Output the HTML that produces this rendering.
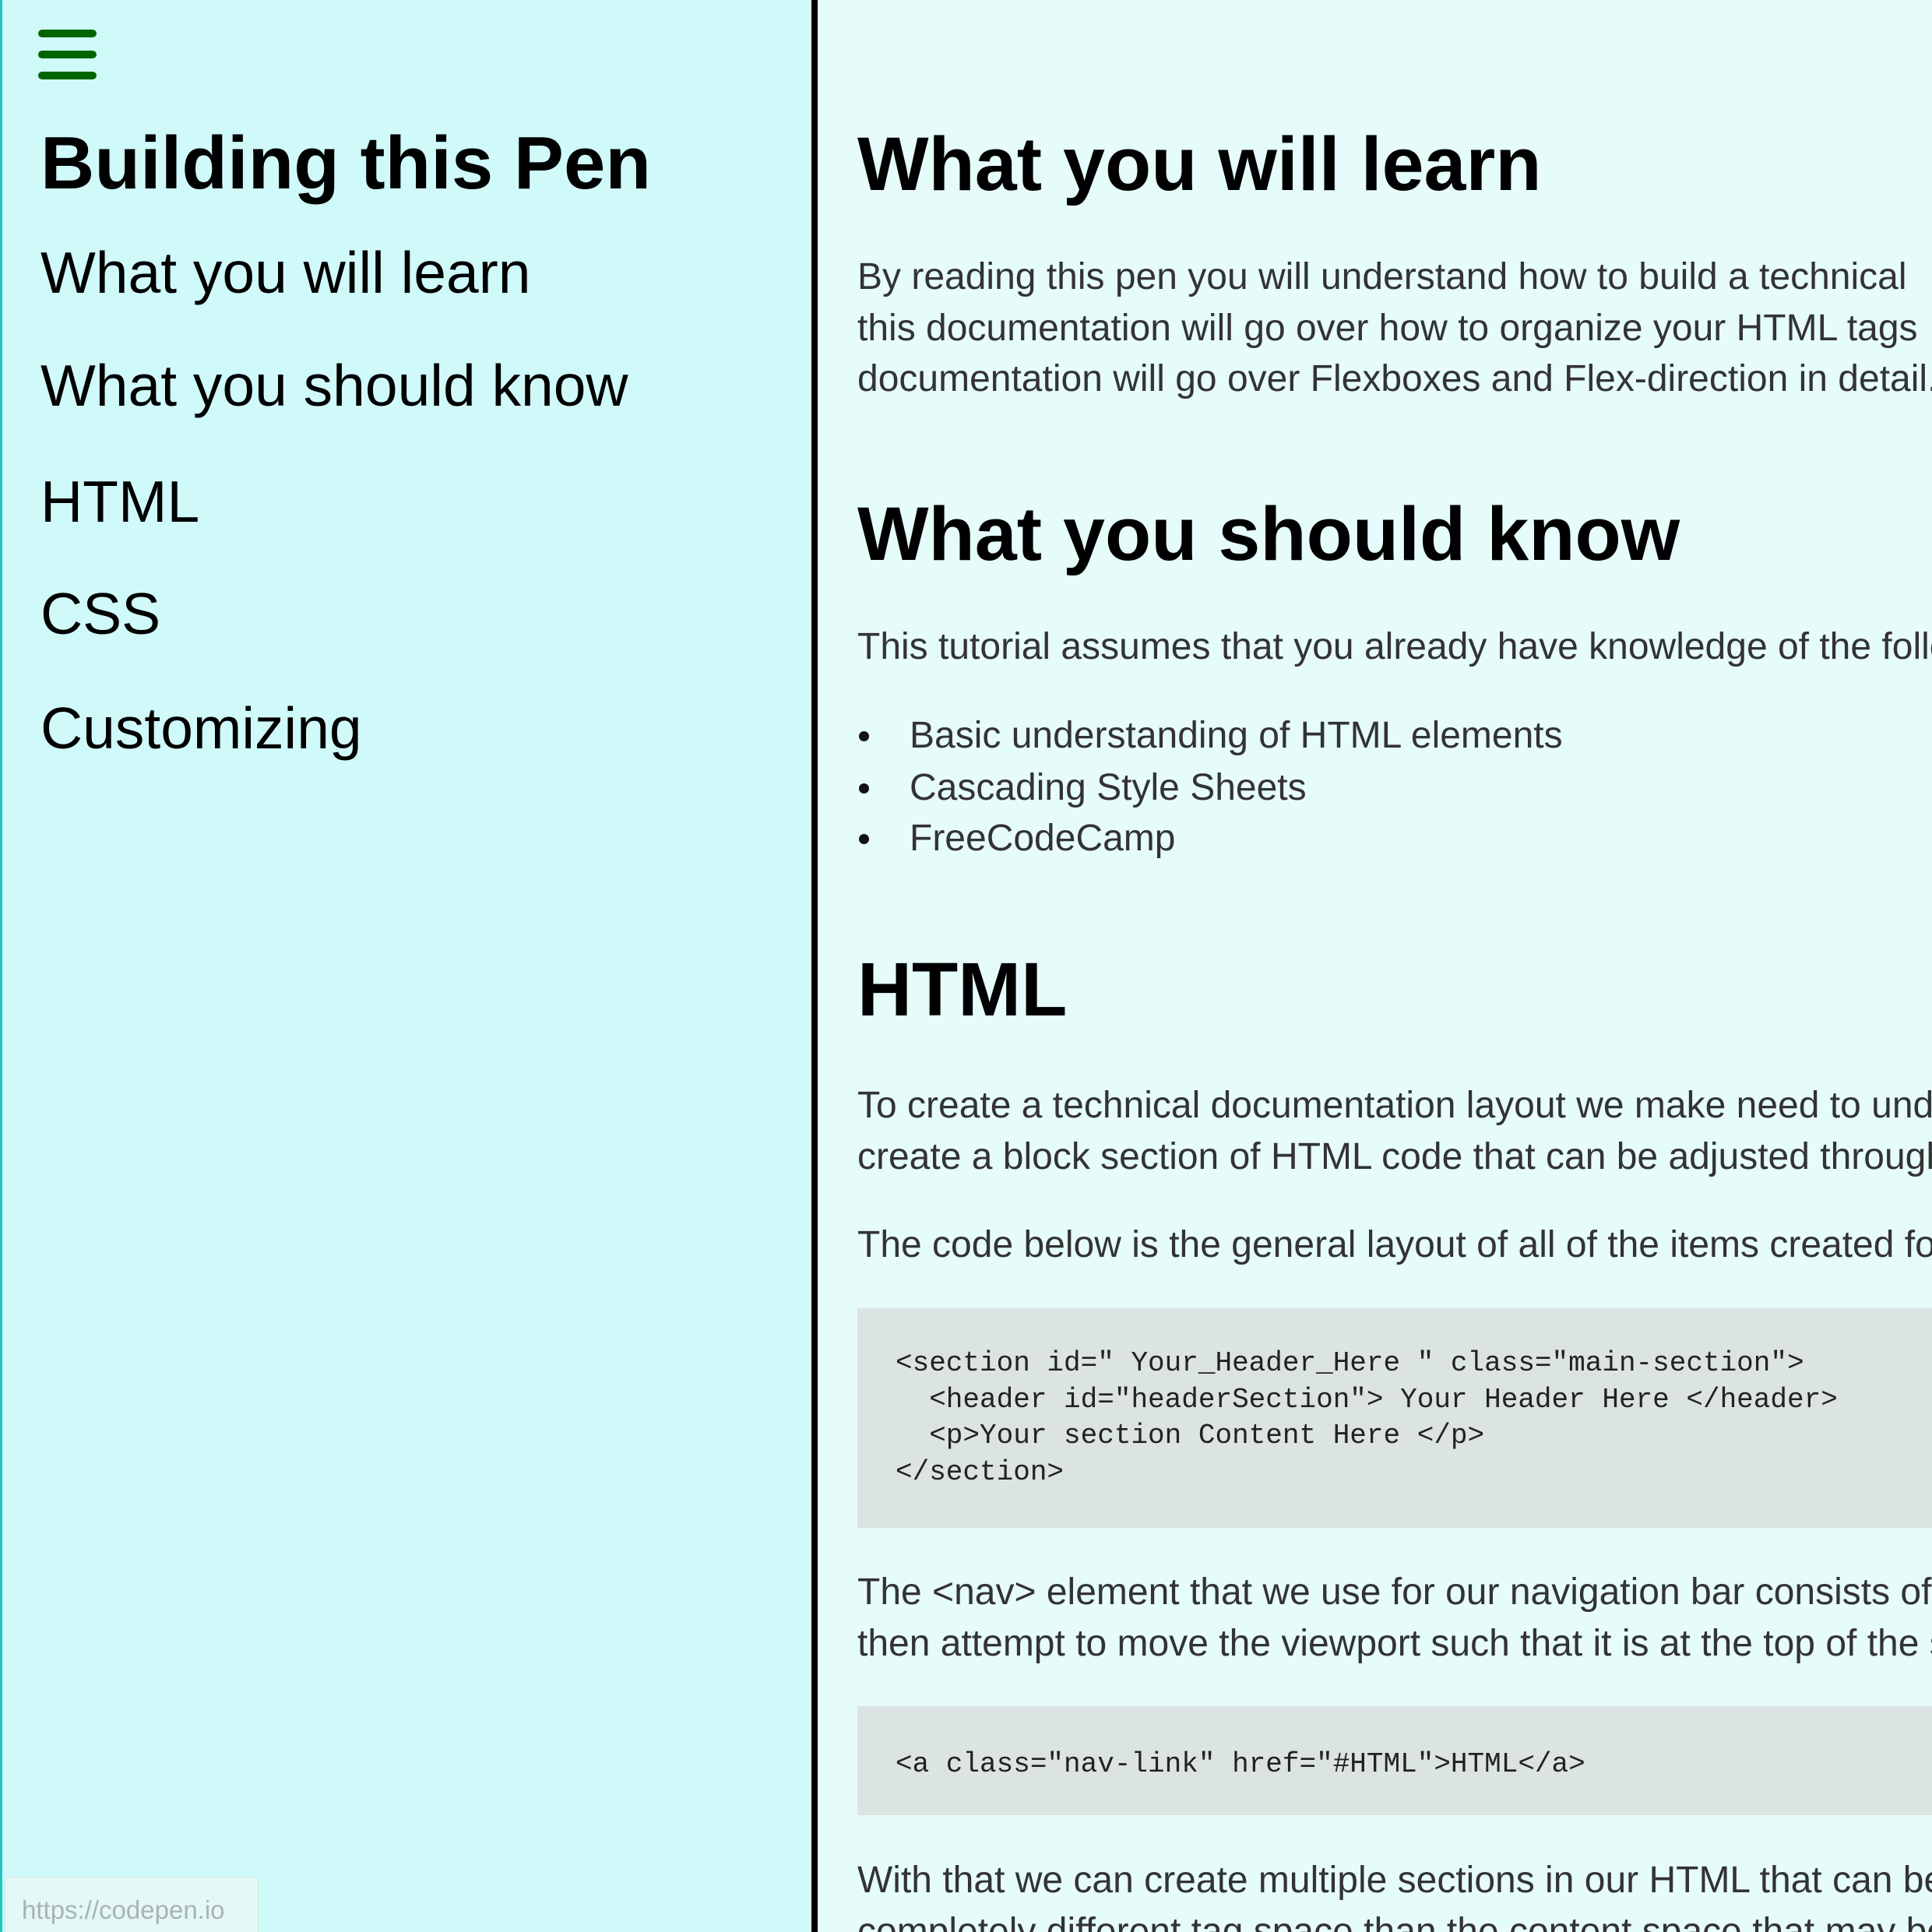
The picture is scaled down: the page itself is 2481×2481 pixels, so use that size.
<!DOCTYPE html>
<html><head><meta charset="utf-8"><style>
html,body{margin:0;padding:0;}
body{width:2481px;height:2481px;overflow:hidden;position:relative;background:#e6fcfa;font-family:"Liberation Sans",sans-serif;}
#wrap{position:absolute;left:0;top:0;width:2481px;height:2481px;overflow:hidden;}
#side{position:absolute;left:0;top:0;width:1042px;height:2481px;background:#d0fafa;border-left:3px solid #22c4c4;box-sizing:border-box;}
#bar{position:absolute;left:1042px;top:0;width:8px;height:2481px;background:#000;}
.t{position:absolute;white-space:nowrap;line-height:1em;}
.nav{font-size:75px;color:#000;left:52px;}
.h{font-size:97px;font-weight:bold;color:#000;}
.p{font-size:48px;color:#333;left:1101px;}
.c{font-family:"Liberation Mono",monospace;font-size:36px;color:#222;left:1150px;white-space:pre;}
.hb{position:absolute;left:49px;width:75px;height:10px;border-radius:5px;background:#006400;}
.code{position:absolute;left:1101px;right:0;background:#dbe3e3;}
.dot{position:absolute;left:1103px;width:13px;height:13px;border-radius:50%;background:#111;}
</style></head><body><div id="wrap">
<div id="side"></div>
<div id="bar"></div>
<div class="hb" style="top:38px"></div>
<div class="hb" style="top:65px"></div>
<div class="hb" style="top:92px"></div>
<div class="t h" style="left:52px;top:162px;font-size:96px">Building this Pen</div>
<div class="t nav" style="top:313px">What you will learn</div>
<div class="t nav" style="top:458px">What you should know</div>
<div class="t nav" style="top:607px">HTML</div>
<div class="t nav" style="top:751px">CSS</div>
<div class="t nav" style="top:898px">Customizing</div>

<div class="t h" style="left:1101px;top:162px">What you will learn</div>
<div class="t p" style="top:332px">By reading this pen you will understand how to build a technical</div>
<div class="t p" style="top:398px">this documentation will go over how to organize your HTML tags</div>
<div class="t p" style="top:463px">documentation will go over Flexboxes and Flex-direction in detail.</div>

<div class="t h" style="left:1101px;top:637px">What you should know</div>
<div class="t p" style="top:807px">This tutorial assumes that you already have knowledge of the following:</div>
<div class="dot" style="top:939px"></div>
<div class="dot" style="top:1006px"></div>
<div class="dot" style="top:1071px"></div>
<div class="t p" style="left:1168px;top:921px">Basic understanding of HTML elements</div>
<div class="t p" style="left:1168px;top:988px">Cascading Style Sheets</div>
<div class="t p" style="left:1168px;top:1053px">FreeCodeCamp</div>

<div class="t h" style="left:1101px;top:1222px">HTML</div>
<div class="t p" style="top:1396px">To create a technical documentation layout we make need to understand</div>
<div class="t p" style="top:1462px">create a block section of HTML code that can be adjusted through CSS.</div>
<div class="t p" style="top:1575px">The code below is the general layout of all of the items created for this page.</div>
<div class="code" style="top:1680px;height:282px"></div>
<div class="t c" style="top:1733px">&lt;section id=" Your_Header_Here " class="main-section"&gt;</div>
<div class="t c" style="top:1780px">  &lt;header id="headerSection"&gt; Your Header Here &lt;/header&gt;</div>
<div class="t c" style="top:1826px">  &lt;p&gt;Your section Content Here &lt;/p&gt;</div>
<div class="t c" style="top:1873px">&lt;/section&gt;</div>
<div class="t p" style="top:2021px">The &lt;nav&gt; element that we use for our navigation bar consists of links</div>
<div class="t p" style="top:2087px">then attempt to move the viewport such that it is at the top of the section.</div>
<div class="code" style="top:2191px;height:140px"></div>
<div class="t c" style="top:2248px">&lt;a class="nav-link" href="#HTML"&gt;HTML&lt;/a&gt;</div>
<div class="t p" style="top:2391px">With that we can create multiple sections in our HTML that can be linked</div>
<div class="t p" style="top:2457px">completely different tag space than the content space that may be used</div>

<div style="position:absolute;left:6px;top:2410px;width:326px;height:75px;background:#e4f8f6;border:1px solid #cfe6e4;box-sizing:border-box;"></div>
<div class="t" style="left:28px;top:2436px;font-size:33px;color:#a8b4b4;">https://codepen.io</div>
</div></body></html>
